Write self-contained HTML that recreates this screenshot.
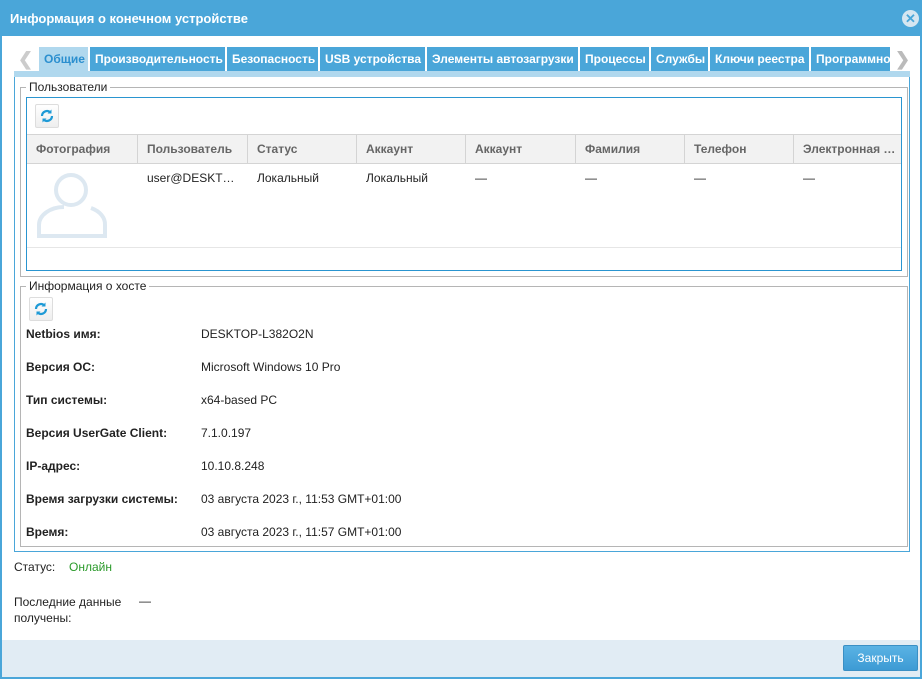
<!DOCTYPE html>
<html><head><meta charset="utf-8"><style>
*{box-sizing:border-box;margin:0;padding:0}
body{width:922px;height:679px;overflow:hidden;font-family:"Liberation Sans",Arial,sans-serif;font-size:12px;color:#222;background:#4aa6d9;position:relative}
.abs{position:absolute}
.title{left:10px;top:11px;color:#fff;font-weight:bold;font-size:13px}
.close{left:902px;top:10px;width:17px;height:17px;border-radius:50%;background:#d6e6f1;color:#4aa6d9;font-size:13px;line-height:17px;text-align:center;font-weight:bold}
.body{left:2px;top:36px;width:918px;height:641px;background:#fff}
.tab{top:47px;height:24px;background:#4aa6d9;color:#fff;font-weight:bold;font-size:12px;line-height:25px;padding-left:5px;white-space:nowrap;overflow:hidden}
.strip{left:14px;top:71px;width:896px;height:6px;background:#b0d8ee}
.fs{border:1px solid #b5b5b5}
.leg{background:#fff;padding:0 3px;font-size:12px}
.rb{width:24px;height:24px;border:1px solid #ddd;border-radius:2px;background:linear-gradient(#fff,#eee)}
th{font-weight:bold;color:#666;text-align:left}
.hc{top:134px;height:30px;line-height:30px;font-weight:bold;color:#666;border-left:1px solid #d4d4d4;padding-left:9px;white-space:nowrap;overflow:hidden}
.dc{top:171px;font-size:12px;white-space:nowrap}
.lab{left:26px;font-weight:bold;font-size:12px}
.val{left:201px;font-size:12px}
</style></head><body>
<div class="abs title">Информация о конечном устройстве</div>
<div class="abs close">✕</div>
<div class="abs body"></div>
<div class="abs" style="left:18px;top:49px;color:#ccc;font-size:18px;font-weight:bold">❮</div>
<div class="abs" style="left:895px;top:49px;color:#bbb;font-size:18px;font-weight:bold">❯</div>
<div class="abs tab" style="left:39px;width:49px;background:#b0d8ee;color:#2b8fcf">Общие</div>
<div class="abs tab" style="left:90px;width:135px">Производительность</div>
<div class="abs tab" style="left:227px;width:91px">Безопасность</div>
<div class="abs tab" style="left:320px;width:105px">USB устройства</div>
<div class="abs tab" style="left:427px;width:151px">Элементы автозагрузки</div>
<div class="abs tab" style="left:580px;width:69px">Процессы</div>
<div class="abs tab" style="left:651px;width:57px">Службы</div>
<div class="abs tab" style="left:710px;width:99px">Ключи реестра</div>
<div class="abs tab" style="left:811px;width:79px">Программное</div>
<div class="abs strip"></div>
<div class="abs" style="left:14px;top:77px;width:896px;height:475px;border:1px solid #4aa6d9;border-top:none"></div>

<div class="abs fs" style="left:20px;top:87px;width:888px;height:190px"></div>
<div class="abs leg" style="left:26px;top:80px">Пользователи</div>
<div class="abs" style="left:26px;top:97px;width:876px;height:174px;border:1px solid #2a95d0"></div>
<div class="abs rb" style="left:35px;top:104px"><svg width="22" height="22" viewBox="0 0 22 22"><path d="M6 11a5 5 0 0 1 8.5-3.5M16 11a5 5 0 0 1-8.5 3.5" stroke="#1e9ad6" stroke-width="2.2" fill="none"/><path d="M15.5 4.5v4h-4z M6.5 17.5v-4h4z" fill="#1e9ad6"/></svg></div>
<div class="abs" style="left:27px;top:134px;width:874px;height:30px;background:#f2f2f2;border-top:1px solid #d4d4d4;border-bottom:1px solid #d4d4d4"></div>
<div class="abs hc" style="left:27px;width:110px;border-left:none">Фотография</div>
<div class="abs hc" style="left:137px;width:110px">Пользователь</div>
<div class="abs hc" style="left:247px;width:109px">Статус</div>
<div class="abs hc" style="left:356px;width:109px">Аккаунт</div>
<div class="abs hc" style="left:465px;width:110px">Аккаунт</div>
<div class="abs hc" style="left:575px;width:109px">Фамилия</div>
<div class="abs hc" style="left:684px;width:109px">Телефон</div>
<div class="abs hc" style="left:793px;width:108px">Электронная …</div>
<div class="abs" style="left:27px;top:247px;width:874px;height:1px;background:#e6e6e6"></div>
<svg class="abs" style="left:36px;top:169px" width="72" height="72" viewBox="0 0 72 72"><circle cx="35" cy="21" r="15" stroke="#dde8f1" stroke-width="4" fill="none"/><path d="M55 39a25 18 0 0 1 14 17v11H3V56a25 18 0 0 1 25-18" stroke="#dde8f1" stroke-width="4" fill="none"/></svg>
<div class="abs dc" style="left:147px">user@DESKT…</div>
<div class="abs dc" style="left:257px">Локальный</div>
<div class="abs dc" style="left:366px">Локальный</div>
<div class="abs dc" style="left:475px">—</div>
<div class="abs dc" style="left:585px">—</div>
<div class="abs dc" style="left:694px">—</div>
<div class="abs dc" style="left:803px">—</div>

<div class="abs fs" style="left:20px;top:286px;width:888px;height:261px"></div>
<div class="abs leg" style="left:26px;top:279px">Информация о хосте</div>
<div class="abs rb" style="left:29px;top:297px"><svg width="22" height="22" viewBox="0 0 22 22"><path d="M6 11a5 5 0 0 1 8.5-3.5M16 11a5 5 0 0 1-8.5 3.5" stroke="#1e9ad6" stroke-width="2.2" fill="none"/><path d="M15.5 4.5v4h-4z M6.5 17.5v-4h4z" fill="#1e9ad6"/></svg></div>
<div class="abs lab" style="top:327px">Netbios имя:</div><div class="abs val" style="top:327px">DESKTOP-L382O2N</div>
<div class="abs lab" style="top:360px">Версия ОС:</div><div class="abs val" style="top:360px">Microsoft Windows 10 Pro</div>
<div class="abs lab" style="top:393px">Тип системы:</div><div class="abs val" style="top:393px">x64-based PC</div>
<div class="abs lab" style="top:426px">Версия UserGate Client:</div><div class="abs val" style="top:426px">7.1.0.197</div>
<div class="abs lab" style="top:459px">IP-адрес:</div><div class="abs val" style="top:459px">10.10.8.248</div>
<div class="abs lab" style="top:492px">Время загрузки системы:</div><div class="abs val" style="top:492px">03 августа 2023 г., 11:53 GMT+01:00</div>
<div class="abs lab" style="top:525px">Время:</div><div class="abs val" style="top:525px">03 августа 2023 г., 11:57 GMT+01:00</div>

<div class="abs" style="left:14px;top:560px">Статус:</div>
<div class="abs" style="left:69px;top:560px;color:#2a9a2a">Онлайн</div>
<div class="abs" style="left:14px;top:594px;line-height:16px">Последние данные<br>получены:</div>
<div class="abs" style="left:139px;top:594px">—</div>

<div class="abs" style="left:2px;top:640px;width:918px;height:37px;background:#e1ecf4"></div>
<div class="abs" style="left:843px;top:645px;width:75px;height:26px;background:linear-gradient(#5ab3e4,#3d9bd4);border:1px solid #3a8fc4;border-radius:2px;color:#fff;text-align:center;line-height:24px;font-size:12px">Закрыть</div>
</body></html>
